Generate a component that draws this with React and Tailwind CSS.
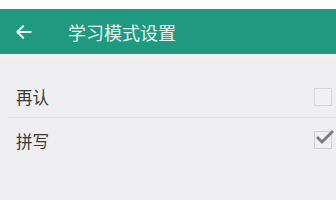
export default function App() {
  const font = { fontFamily: '"Noto Sans CJK SC", "Noto Sans", sans-serif' };
  return (
    <div className="w-[336px] h-[200px] bg-[#efeef1] overflow-hidden" style={font}>
      <div className="h-[9px] bg-white" />
      <div className="h-[45px] bg-[#1f9a80] flex items-center">
        <svg width="20" height="20" viewBox="0 0 24 24" className="ml-[14px] text-[#eaf6f2]" fill="none" stroke="currentColor" strokeWidth="2.6" strokeLinecap="round" strokeLinejoin="round">
          <path d="M20 12H5" />
          <path d="M11 5l-7 7 7 7" />
        </svg>
        <span className="ml-[34px] text-[18px] leading-none text-[#e6f3ef]">学习模式设置</span>
      </div>
      <div className="h-[4px] bg-[#eef0f3]" />
      <div className="pt-[19px]">
        <div className="flex items-center justify-between h-[40px] pl-[16px] pr-[4px]">
          <span className="text-[16.5px] text-[#383838] leading-none">再认</span>
          <div className="w-[18px] h-[18px] border border-[#d6d6d8] bg-[#f1f0f3]" />
        </div>
        <div className="ml-[8px] h-px bg-[#e2e1e4]" />
        <div className="flex items-center justify-between h-[46px] pl-[16px] pr-[4px]">
          <span className="text-[16.5px] text-[#383838] leading-none">拼写</span>
          <div className="relative w-[18px] h-[18px] border border-[#d0d0d2] bg-[#f1f0f3] -translate-y-px">
            <svg width="18" height="16" viewBox="0 0 18 16" className="absolute left-[1px] -top-[3px]" fill="none" stroke="#7b7b7d" strokeWidth="3" strokeLinecap="square" strokeLinejoin="miter">
              <path d="M2 9l4 4 10-10" />
            </svg>
          </div>
        </div>
      </div>
    </div>
  );
}
